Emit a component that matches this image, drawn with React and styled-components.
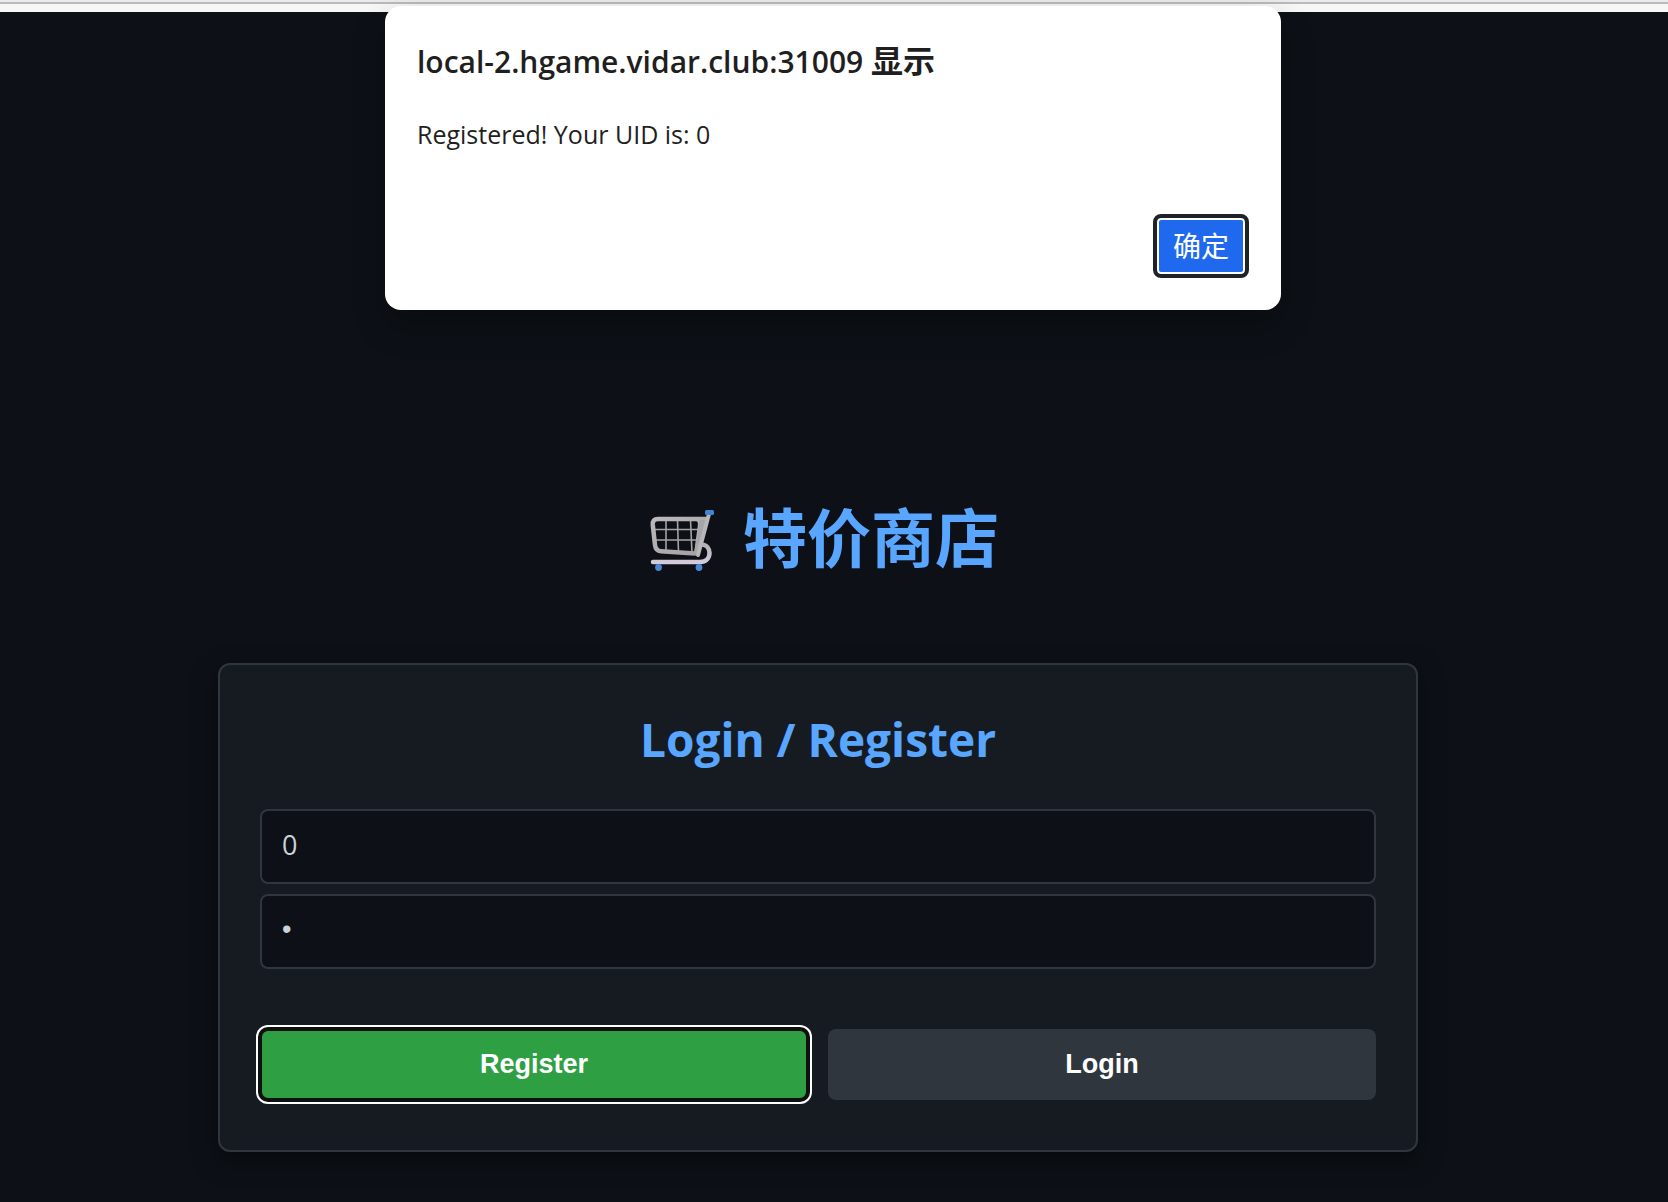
import React, { useState } from 'react'
import styled, { createGlobalStyle, css } from 'styled-components'

const uiFont = '"Open Sans", "Noto Sans CJK SC", sans-serif'

function CartIcon() {
  return (
    <Cart viewBox="9 5 66 66" aria-hidden="true">
      <defs>
        <linearGradient id="frame" x1="0" y1="0" x2="1" y2="1">
          <stop offset="0" stopColor="#bcb9bd" />
          <stop offset="1" stopColor="#a39fa3" />
        </linearGradient>
        <linearGradient id="base" x1="0" y1="0" x2="0" y2="1">
          <stop offset="0" stopColor="#b5b1b4" />
          <stop offset="1" stopColor="#d3cadb" />
        </linearGradient>
      </defs>
      <g fill="none" stroke="#a5a2a6" strokeWidth="1.6">
        <path d="M26 20V52M37.500 20L38.500 53M50.500 20L52 53" />
        <path d="M14 29.500H60M15 40H58" />
      </g>
      <path d="M62 44.500C67 45 69.500 49 69.500 53C69.500 58 66 62 60 62H13" fill="none" stroke="url(#base)" strokeWidth="4.500" strokeLinecap="round" />
      <path d="M66 19H18C14 19 12.500 21 12.800 25L15 45C15.500 49 17 51 21 51.300L55 53.500" fill="none" stroke="url(#frame)" strokeWidth="4.500" strokeLinecap="round" />
      <path d="M56 19.500C59 20 59.600 22 59 26L55.500 52" fill="none" stroke="#b5b2b5" strokeWidth="2.500" />
      <path d="M60 20H66L58 53H54Z" fill="#a8a5a8" />
      <path d="M69 14L58 55" fill="none" stroke="#bab7b8" strokeWidth="4" strokeLinecap="round" />
      <rect x="65" y="10" width="9" height="5" rx="1.500" fill="#3f86cf" />
      <circle cx="18.500" cy="67.500" r="3.400" fill="#4a86d8" />
      <circle cx="59" cy="67.500" r="3.400" fill="#4a86d8" />
    </Cart>
  )
}

function App() {
  const [username, setUsername] = useState('0')
  const [password, setPassword] = useState('0')
  const [open, setOpen] = useState(true)

  const handleSubmit = (e) => {
    e.preventDefault()
    setOpen(true)
  }

  return (
    <>
      <GlobalStyle />
      <BrowserEdge />
      <Page>
        <Title>
          <CartIcon />
          特价商店
        </Title>
        <Card onSubmit={handleSubmit}>
          <CardTitle>Login / Register</CardTitle>
          <Fields>
            <Field
              aria-label="Username"
              value={username}
              onChange={(e) => setUsername(e.target.value)}
            />
            <Field
              type="password"
              aria-label="Password"
              value={password}
              onChange={(e) => setPassword(e.target.value)}
            />
          </Fields>
          <Actions>
            <Button type="submit" $primary>Register</Button>
            <Button type="button">Login</Button>
          </Actions>
        </Card>
      </Page>
      {open && (
        <AlertLayer>
          <Alert role="alertdialog" aria-labelledby="alert-title">
            <AlertTitle id="alert-title">
              local-2.hgame.vidar.club:31009 <span>显示</span>
            </AlertTitle>
            <AlertText>Registered! Your UID is: 0</AlertText>
            <Confirm type="button" onClick={() => setOpen(false)}>确定</Confirm>
          </Alert>
        </AlertLayer>
      )}
    </>
  )
}

const GlobalStyle = createGlobalStyle`
  * {
    box-sizing: border-box;
  }
  body {
    margin: 0;
    background: #0d1117;
    font-family: ${uiFont};
  }
  h1, h2, p {
    margin: 0;
  }
`

const BrowserEdge = styled.div`
  height: 12px;
  background: #f7f7f7;
  border-top: 2px solid #ebebeb;
  box-shadow: inset 0 2px 0 #bababa;
`

const Page = styled.main`
  display: flex;
  flex-direction: column;
  align-items: center;
  gap: 77px;
  padding: 478px 32px 49px 0;
`

const Title = styled.h1`
  display: flex;
  align-items: center;
  gap: 28px;
  padding-left: 12px;
  font-size: 64px;
  line-height: 96px;
  font-weight: 700;
  color: #58a6ff;
`

const Cart = styled.svg`
  width: 66px;
  height: 66px;
`

const Card = styled.form`
  width: 100%;
  max-width: 1200px;
  padding: 40px 40px 50px;
  background: #161b22;
  border: 2px solid #30363d;
  border-radius: 12px;
  box-shadow: 0 8px 24px rgba(0, 0, 0, 0.5);
`

const CardTitle = styled.h2`
  margin-bottom: 36px;
  font-size: 46px;
  line-height: 68px;
  font-weight: 700;
  text-align: center;
  color: #58a6ff;
`

const Fields = styled.div`
  display: flex;
  flex-direction: column;
  gap: 10px;
`

const Field = styled.input`
  width: 100%;
  height: 75px;
  padding: 0 20px 4px;
  background: #0d1117;
  border: 2px solid #30363d;
  border-radius: 8px;
  outline: none;
  font-family: ${uiFont};
  font-size: 27px;
  color: #c9d1d9;
  &[type="password"] {
    font-family: "Liberation Sans", Arial, sans-serif;
  }
`

const Actions = styled.div`
  display: grid;
  grid-template-columns: 1fr 1fr;
  gap: 20px;
  margin-top: 60px;
`

const Button = styled.button`
  height: 71px;
  padding: 0;
  background: #30363d;
  border: none;
  border-radius: 8px;
  font-family: "Liberation Sans", Arial, sans-serif;
  font-size: 27px;
  font-weight: 700;
  color: #fff;
  ${({ $primary }) => $primary && css`
    background: #2ea043;
    border: 2px solid #101010;
    box-shadow: 0 0 0 2px #101010, 0 0 0 4px #fff;
  `}
`

const AlertLayer = styled.div`
  position: absolute;
  top: 6px;
  left: 0;
  right: 0;
  display: flex;
  justify-content: center;
  padding-right: 2px;
`

const Alert = styled.div`
  display: flex;
  flex-direction: column;
  width: 100%;
  max-width: 896px;
  padding: 32px;
  background: #fff;
  border-radius: 16px;
  box-shadow: 0 16px 32px rgba(0, 0, 0, 0.3);
  color: #1f1f1f;
`

const AlertTitle = styled.h2`
  font-size: 30px;
  line-height: 48px;
  font-weight: 600;
  span {
    font-family: "Noto Sans CJK SC", sans-serif;
    font-size: 32px;
    line-height: 1;
    font-weight: 700;
  }
`

const AlertText = styled.p`
  margin-top: 28px;
  font-size: 25px;
  line-height: 40px;
`

const Confirm = styled.button`
  align-self: flex-end;
  width: 96px;
  height: 64px;
  margin-top: 60px;
  padding: 0 0 2px;
  background: #1f69ee;
  border: 4px solid #1f2328;
  border-radius: 8px;
  box-shadow: inset 0 0 0 2px #fff;
  font-family: ${uiFont};
  font-size: 28px;
  color: #fff;
`

export default App
